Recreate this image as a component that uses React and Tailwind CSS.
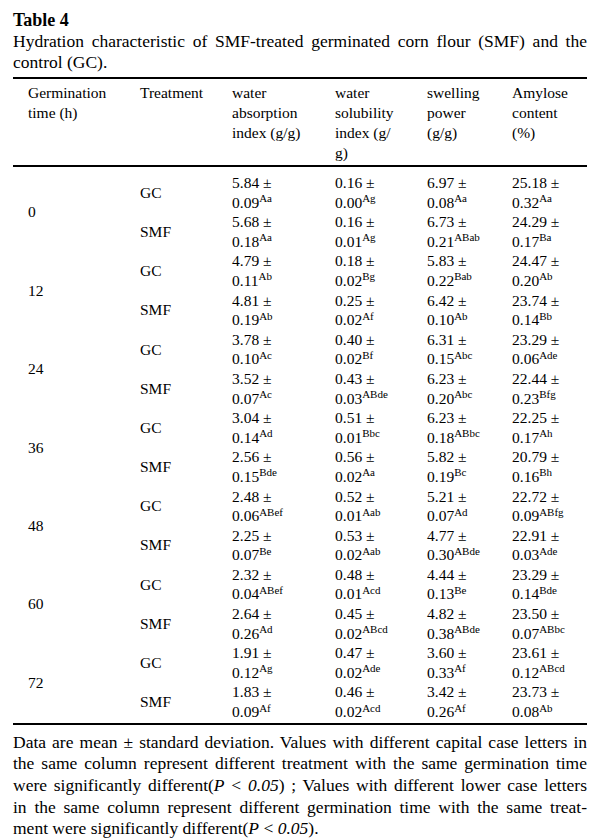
import React from "react";

const data = [
  ["0", [
    ["GC", [["5.84", "0.09", "Aa"], ["0.16", "0.00", "Ag"], ["6.97", "0.08", "Aa"], ["25.18", "0.32", "Aa"]]],
    ["SMF", [["5.68", "0.18", "Aa"], ["0.16", "0.01", "Ag"], ["6.73", "0.21", "ABab"], ["24.29", "0.17", "Ba"]]],
  ]],
  ["12", [
    ["GC", [["4.79", "0.11", "Ab"], ["0.18", "0.02", "Bg"], ["5.83", "0.22", "Bab"], ["24.47", "0.20", "Ab"]]],
    ["SMF", [["4.81", "0.19", "Ab"], ["0.25", "0.02", "Af"], ["6.42", "0.10", "Ab"], ["23.74", "0.14", "Bb"]]],
  ]],
  ["24", [
    ["GC", [["3.78", "0.10", "Ac"], ["0.40", "0.02", "Bf"], ["6.31", "0.15", "Abc"], ["23.29", "0.06", "Ade"]]],
    ["SMF", [["3.52", "0.07", "Ac"], ["0.43", "0.03", "ABde"], ["6.23", "0.20", "Abc"], ["22.44", "0.23", "Bfg"]]],
  ]],
  ["36", [
    ["GC", [["3.04", "0.14", "Ad"], ["0.51", "0.01", "Bbc"], ["6.23", "0.18", "ABbc"], ["22.25", "0.17", "Ah"]]],
    ["SMF", [["2.56", "0.15", "Bde"], ["0.56", "0.02", "Aa"], ["5.82", "0.19", "Bc"], ["20.79", "0.16", "Bh"]]],
  ]],
  ["48", [
    ["GC", [["2.48", "0.06", "ABef"], ["0.52", "0.01", "Aab"], ["5.21", "0.07", "Ad"], ["22.72", "0.09", "ABfg"]]],
    ["SMF", [["2.25", "0.07", "Be"], ["0.53", "0.02", "Aab"], ["4.77", "0.30", "ABde"], ["22.91", "0.03", "Ade"]]],
  ]],
  ["60", [
    ["GC", [["2.32", "0.04", "ABef"], ["0.48", "0.01", "Acd"], ["4.44", "0.13", "Be"], ["23.29", "0.14", "Bde"]]],
    ["SMF", [["2.64", "0.26", "Ad"], ["0.45", "0.02", "ABcd"], ["4.82", "0.38", "ABde"], ["23.50", "0.07", "ABbc"]]],
  ]],
  ["72", [
    ["GC", [["1.91", "0.12", "Ag"], ["0.47", "0.02", "Ade"], ["3.60", "0.33", "Af"], ["23.61", "0.12", "ABcd"]]],
    ["SMF", [["1.83", "0.09", "Af"], ["0.46", "0.02", "Acd"], ["3.42", "0.26", "Af"], ["23.73", "0.08", "Ab"]]],
  ]],
];

const widths = ["w-[103px]", "w-[92px]", "w-[85px]", "w-[75px]"];

function Cell({ v, w }) {
  return (
    <div className={`${w} whitespace-nowrap`}>
      <div>{v[0]} ±</div>
      <div>
        {v[1]}
        <sup className="text-[11px]">{v[2]}</sup>
      </div>
    </div>
  );
}

const J = "text-justify [text-align-last:justify] whitespace-nowrap";

export default function App() {
  return (
    <div
      className="w-[600px] h-[840px] overflow-hidden bg-white text-black px-[13px] pt-[10px]"
      style={{ fontFamily: '"Liberation Serif", "Times New Roman", serif' }}
    >
      <div className="text-[18px] leading-[21px] font-bold">Table 4</div>
      <div className="text-[17.5px] leading-[21px]">
        <div className={J}>
          Hydration characteristic of SMF-treated germinated corn flour (SMF) and the
        </div>
        <div>control (GC).</div>
      </div>

      <div className="mt-[4px] border-t-2 border-black">
        <div className="flex pt-[4px] pb-[2px] text-[15.5px] leading-[20px] whitespace-nowrap border-b-2 border-black">
          <div className="w-[127px] pl-[15px]">
            Germination
            <br />
            time (h)
          </div>
          <div className="w-[92px]">Treatment</div>
          <div className="w-[103px]">
            water
            <br />
            absorption
            <br />
            index (g/g)
          </div>
          <div className="w-[92px]">
            water
            <br />
            solubility
            <br />
            index (g/
            <br />
            g)
          </div>
          <div className="w-[85px]">
            swelling
            <br />
            power
            <br />
            (g/g)
          </div>
          <div className="w-[75px]">
            Amylose
            <br />
            content
            <br />
            (%)
          </div>
        </div>

        <div className="pt-[6px] pb-[1px] border-b-2 border-black text-[15.5px] leading-[19.6px]">
          {data.map(([time, rows]) => (
            <div key={time} className="flex">
              <div className="w-[127px] pl-[15px] flex items-center">{time}</div>
              <div className="flex flex-col">
                {rows.map(([tr, vals]) => (
                  <div key={tr} className="flex">
                    <div className="w-[92px] flex items-center">{tr}</div>
                    {vals.map((v, i) => (
                      <Cell key={i} v={v} w={widths[i]} />
                    ))}
                  </div>
                ))}
              </div>
            </div>
          ))}
        </div>
      </div>

      <div className="mt-[7px] text-[17.5px] leading-[21.7px]">
        <div className={J}>
          Data are mean ± standard deviation. Values with different capital case letters in
        </div>
        <div className={J}>
          the same column represent different treatment with the same germination time
        </div>
        <div className={J}>
          were significantly different(<i>P</i> &lt; <i>0.05</i>) ; Values with different lower case letters
        </div>
        <div className={J}>
          in the same column represent different germination time with the same treat-
        </div>
        <div>
          ment were significantly different(<i>P</i> &lt; <i>0.05</i>).
        </div>
      </div>
    </div>
  );
}
